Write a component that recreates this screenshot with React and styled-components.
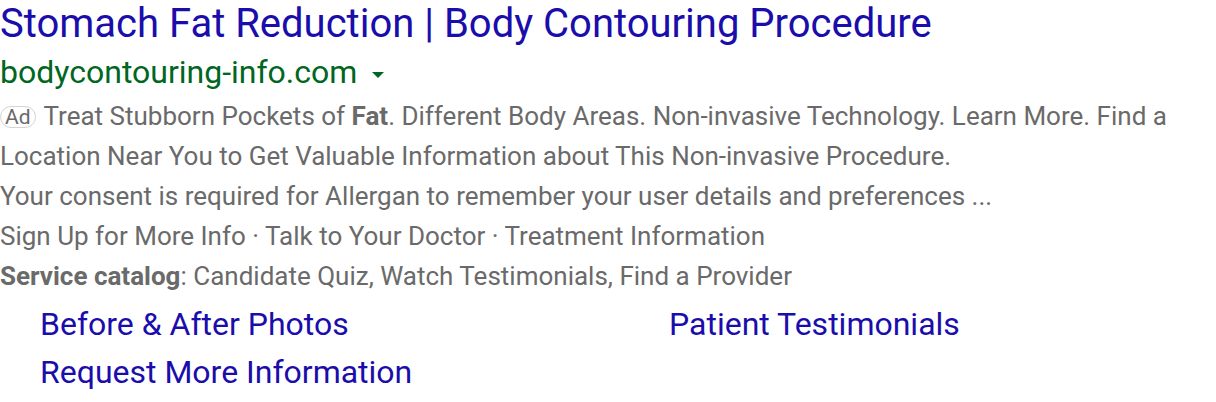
import React from "react";
import styled, { createGlobalStyle } from "styled-components";

const GlobalStyle = createGlobalStyle`
    body {
        margin: 0;
        background: #fff;
        font-family: Roboto, "Noto Sans", Arial, sans-serif;
    }
`;

const Result = styled.div`
    padding: 0;
`;

const Title = styled.a`
    display: block;
    color: #1a0dab;
    font-size: 40px;
    line-height: 48px;
    text-decoration: none;
    white-space: nowrap;
`;

const UrlRow = styled.div`
    display: flex;
    align-items: center;
    gap: 15px;
    color: #006621;
    font-size: 32px;
    line-height: 48px;
`;

const Caret = styled.span`
    width: 0;
    height: 0;
    border-left: 6px solid transparent;
    border-right: 6px solid transparent;
    border-top: 6px solid #006621;
    margin-top: 6px;
`;

const Text = styled.div`
    color: #6a6a6a;
    font-size: 26px;
    line-height: 40px;
`;

const Badge = styled.span`
    display: inline-block;
    border: 1.5px solid #d4d4d4;
    border-radius: 11px;
    padding: 0 4px;
    font-size: 21px;
    line-height: 20px;
    margin-right: 8px;
    vertical-align: 1px;
    color: #6a6a6a;
`;

const Sitelinks = styled.div`
    display: grid;
    grid-template-columns: 629px auto;
    padding-left: 40px;
    margin-top: 4px;
`;

const Sitelink = styled.a`
    color: #1a0dab;
    font-size: 32px;
    line-height: 48px;
    text-decoration: none;
`;

export default function App() {
    return (
        <Result>
            <GlobalStyle />
            <Title href="#">Stomach Fat Reduction | Body Contouring Procedure</Title>
            <UrlRow>
                bodycontouring-info.com
                <Caret />
            </UrlRow>
            <Text>
                <Badge>Ad</Badge>Treat Stubborn Pockets of <b>Fat</b>. Different Body Areas. Non-invasive Technology. Learn More. Find a Location Near You to Get Valuable Information about This Non-invasive Procedure.
            </Text>
            <Text>Your consent is required for Allergan to remember your user details and preferences ...</Text>
            <Text>Sign Up for More Info · Talk to Your Doctor · Treatment Information</Text>
            <Text><b>Service catalog</b>: Candidate Quiz, Watch Testimonials, Find a Provider</Text>
            <Sitelinks>
                <Sitelink href="#">Before &amp; After Photos</Sitelink>
                <Sitelink href="#">Patient Testimonials</Sitelink>
                <Sitelink href="#">Request More Information</Sitelink>
            </Sitelinks>
        </Result>
    );
}
